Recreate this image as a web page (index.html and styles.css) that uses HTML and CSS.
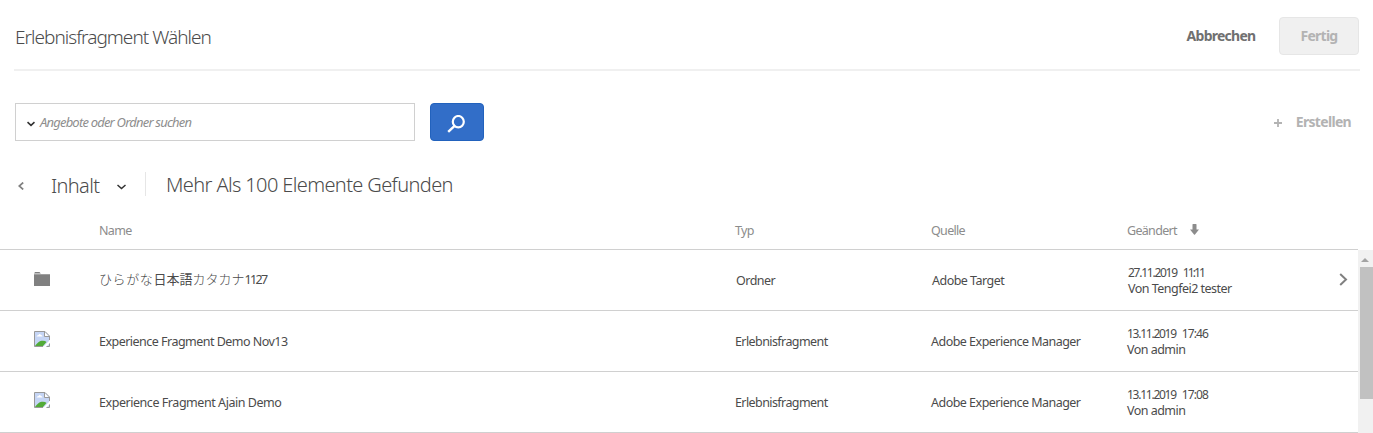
FILE: index.html
```html
<!DOCTYPE html>
<html lang="de">
<head>
<meta charset="utf-8">
<title>Erlebnisfragment Wählen</title>
<link rel="stylesheet" href="styles.css">
</head>
<body>
<div class="dialog">
  <header class="top">
    <h1 class="title">Erlebnisfragment Wählen</h1>
    <button class="btn-cancel"><span>Abbrechen</span></button>
    <button class="btn-done"><span>Fertig</span></button>
  </header>
  <div class="toolbar">
    <div class="search">
      <svg class="chev" width="8" height="6" viewBox="0 0 8 6"><path d="M0.5 1.2 L4 4.4 L7.500 1.2" fill="none" stroke="#323232" stroke-width="1.6"/></svg>
      <span class="placeholder">Angebote oder Ordner suchen</span>
    </div>
    <button class="btn-search">
      <svg width="18" height="18" viewBox="0 0 18 18"><ellipse cx="11.300" cy="6.700" rx="5.500" ry="5.700" fill="none" stroke="#fff" stroke-width="2.200"/><path d="M7.600 10.800 L1.200 16.800" stroke="#fff" stroke-width="2.400" fill="none"/></svg>
    </button>
    <div class="create">
      <svg width="8" height="8" viewBox="0 0 8 8"><path d="M4 0V8M0 4H8" stroke="#b3b3b3" stroke-width="1.800"/></svg>
      <span>Erstellen</span>
    </div>
  </div>
  <nav class="crumbs">
    <svg class="back" width="6" height="8" viewBox="0 0 6 8"><path d="M5.200 0.500 L1.200 4 L5.200 7.500" fill="none" stroke="#808080" stroke-width="1.700"/></svg>
    <span class="crumb">Inhalt</span>
    <svg class="crumb-chev" width="9" height="6" viewBox="0 0 9 6"><path d="M0.500 1 L4.500 4.500 L8.500 1" fill="none" stroke="#323232" stroke-width="1.500"/></svg>
    <span class="rule"></span>
    <span class="count">Mehr Als 100 Elemente Gefunden</span>
  </nav>
  <div class="grid head">
    <span></span><span>Name</span><span>Typ</span><span>Quelle</span>
    <span class="sort"><span>Geändert</span><svg width="9" height="11" viewBox="0 0 9 11"><path d="M2.500 0.500 Q2.500 0 3 0 H6 Q6.500 0 6.500 0.500 V5.500 H9 L5 10.600 Q4.500 11.100 4 10.600 L0 5.500 H2.500Z" fill="#8c8c8c"/></svg></span>
  </div>
  <div class="body">
    <div class="list">
      <div class="grid row">
        <svg class="icon" width="16" height="15" viewBox="0 0 16 15"><path d="M0 2.500 L1 1 H5.500 L6.800 2.500Z M0 3.300 H16 V15 H0Z" fill="#808080"/></svg>
        <span class="jp"><span class="kana wide">ひらがな</span><span class="kanji">日本語</span><span class="kana">カタカナ</span><span class="num">1127</span></span>
        <span class="shift">Ordner</span><span class="shift">Adobe Target</span>
        <span class="date shift"><span class="day">27.11.2019</span><span class="time ones">11:11</span><br>Von Tengfei2 tester</span>
        <svg class="open" width="9" height="13" viewBox="0 0 9 13"><path d="M1.200 1 L7 6.500 L1.200 12" fill="none" stroke="#808080" stroke-width="2"/></svg>
      </div>
      <div class="grid row">
        <svg class="icon" width="16" height="16" viewBox="0 0 16 16"><path d="M0.500 0.500 H11 L15.500 5 V15.500 H0.500Z" fill="#c5d5f5"/><path d="M2.500 5.500 Q3 4 4.500 4 Q5.500 2 7 4 Q8.500 4 8.500 5.500Z" fill="#fff"/><path d="M1 15 Q4 10.500 7.500 9.800 Q11 9.300 12.500 11 L9 15Z" fill="#52ab38"/><path d="M16 9 L9 16 H12 L16 12Z" fill="#fff"/><path d="M9 15.500 H0.500 V0.500 H11 L15.500 5 V9 M15.500 12.500 V15.500 H12.500" fill="none" stroke="#999"/><path d="M10.500 1 V5.500 H15" fill="#fff" stroke="#999"/></svg>
        <span>Experience Fragment Demo Nov13</span>
        <span class="type">Erlebnisfragment</span><span>Adobe Experience Manager</span>
        <span class="date"><span class="day">13.11.2019</span><span class="time">17:46</span><br>Von admin</span>
      </div>
      <div class="grid row">
        <svg class="icon" width="16" height="16" viewBox="0 0 16 16"><path d="M0.500 0.500 H11 L15.500 5 V15.500 H0.500Z" fill="#c5d5f5"/><path d="M2.500 5.500 Q3 4 4.500 4 Q5.500 2 7 4 Q8.500 4 8.500 5.500Z" fill="#fff"/><path d="M1 15 Q4 10.500 7.500 9.800 Q11 9.300 12.500 11 L9 15Z" fill="#52ab38"/><path d="M16 9 L9 16 H12 L16 12Z" fill="#fff"/><path d="M9 15.500 H0.500 V0.500 H11 L15.500 5 V9 M15.500 12.500 V15.500 H12.500" fill="none" stroke="#999"/><path d="M10.500 1 V5.500 H15" fill="#fff" stroke="#999"/></svg>
        <span class="last">Experience Fragment Ajain Demo</span>
        <span class="type">Erlebnisfragment</span><span>Adobe Experience Manager</span>
        <span class="date"><span class="day">13.11.2019</span><span class="time">17:08</span><br>Von admin</span>
      </div>
    </div>
    <div class="scrollbar">
      <svg width="8" height="4" viewBox="0 0 8 4"><path d="M4 0 L8 4 H0Z" fill="#a3a3a3"/></svg>
      <div class="thumb"></div>
    </div>
  </div>
</div>
</body>
</html>
```
FILE: styles.css
```css
* { box-sizing: border-box; }
body {
  margin: 0;
  background: #fff;
  color: #4b4b4b;
  font-family: "Noto Sans", "Noto Sans CJK JP", sans-serif;
  font-size: 12.5px;
  overflow: hidden;
}
svg { display: block; flex: none; }
button { font: inherit; padding: 0; cursor: pointer; }
.dialog { height: 433px; display: flex; flex-direction: column; }

.top {
  height: 71px;
  flex: none;
  margin: 0 13px 0 14px;
  padding: 17px 1px 0;
  display: flex;
  align-items: flex-start;
  border-bottom: 2px solid #f0f0f0;
}
.title { margin: 6px auto 0 0; font-size: 19px; line-height: 28px; font-weight: 300; letter-spacing: -0.97px; white-space: nowrap; }
.btn-cancel, .btn-done { height: 38px; padding-bottom: 2px; font-size: 14px; font-weight: 700; letter-spacing: -0.75px; }
.btn-cancel { width: 70px; border: 0; background: none; color: #707070; }
.btn-done { margin-left: 23px; width: 80px; border: 1px solid #e6e6e6; border-radius: 4px; background: #f0f0f0; color: #b3b3b3; }

.toolbar { margin: 32px 22px 0 15px; height: 38px; flex: none; display: flex; align-items: center; }
.search { width: 400px; height: 38px; border: 1px solid #d0d0d0; display: flex; align-items: center; padding-left: 11px; }
.chev { margin: 3px 5px 0 0; }
.placeholder { color: #8e8e8e; font-style: italic; font-size: 13px; letter-spacing: -0.8px; white-space: nowrap; }
.btn-search { margin-left: 15px; width: 54px; height: 38px; border: 1px solid #2262bd; border-radius: 4px; background: #326ec8; display: flex; align-items: center; justify-content: center; padding: 3px 2px 0 0; }
.create { margin-left: auto; display: flex; align-items: center; gap: 14px; color: #b3b3b3; font-size: 14px; font-weight: 700; letter-spacing: -0.68px; }
.create svg { margin-top: 2px; }
.create span { margin-top: -2px; }

.crumbs { height: 68px; flex: none; display: flex; align-items: center; padding: 20px 0 0 18px; font-size: 20px; font-weight: 300; line-height: 28px; white-space: nowrap; }
.back { margin-top: 2px; }
.crumb { margin: 2px 0 0 27px; width: 49px; letter-spacing: -0.65px; }
.crumb-chev { margin-left: 17px; margin-top: 4px; }
.rule { width: 1px; height: 24px; margin: -3px 20px 0 19px; background: #e6e6e6; }
.count { letter-spacing: -0.62px; }

.grid { display: grid; grid-template-columns: 65px 636px 196px 196px 212px 19px; padding-left: 34px; align-items: center; white-space: nowrap; }
.head { height: 41px; flex: none; padding-top: 2px; color: #8c8c8c; border-bottom: 1px solid #d0d0d0; margin-right: 15px; letter-spacing: -0.68px; }
.sort { display: flex; align-items: center; gap: 13px; }
.sort svg { margin-top: -2px; }
.body { display: flex; flex: 1; }
.list { flex: 1; }
.row { height: 61px; border-bottom: 1px solid #d0d0d0; letter-spacing: -0.52px; }
.type { letter-spacing: -0.58px; }
.last { letter-spacing: -0.45px; }
.icon { margin-bottom: 4px; }
.open { margin-bottom: 2px; }
.shift { padding-left: 1px; }
.date { line-height: 16px; padding-top: 1px; }
.day { font-size: 12px; letter-spacing: -1.25px; }
.time { margin-left: 6px; font-size: 12px; letter-spacing: -0.9px; }
.ones { letter-spacing: -1.9px; }
.jp { line-height: 18px; margin-top: -1px; }
.kana, .kanji { font-family: "Noto Sans CJK JP", sans-serif; font-size: 13px; letter-spacing: 0; }
.kana { font-weight: 300; }
.wide { letter-spacing: 0.6px; }
.num { letter-spacing: -1.6px; }
.scrollbar { width: 15px; background: #f1f1f1; display: flex; flex-direction: column; align-items: flex-end; }
.scrollbar svg { margin: 8px 4px 5px 0; }
.thumb { width: 13px; height: 132px; background: #c1c1c1; }
```
